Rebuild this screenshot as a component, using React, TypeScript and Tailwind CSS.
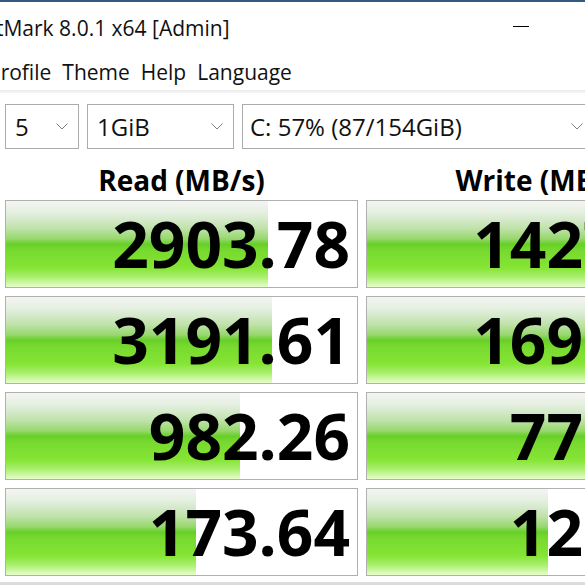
import React from "react";

const font = { fontFamily: '"Open Sans", "Noto Sans", sans-serif' };

interface Result {
  value: string;
  fill: number;
}

const readRows: Result[] = [
  { value: "2903.78", fill: 262 },
  { value: "3191.61", fill: 266 },
  { value: "982.26", fill: 234 },
  { value: "173.64", fill: 190 },
];

const writeRows: Result[] = [
  { value: "1427.52", fill: 400 },
  { value: "1695.33", fill: 400 },
  { value: "778.96", fill: 400 },
  { value: "125.47", fill: 181 },
];

const Chevron = () => (
  <svg width="12" height="7" viewBox="0 0 12 7" className="shrink-0">
    <path d="M0.5 0.5 L6 6 L11.5 0.5" fill="none" stroke="#808080" strokeWidth="1" />
  </svg>
);

const Combo = ({ label, className }: { label: string; className: string }) => (
  <div
    className={`h-[45px] border border-[#ababab] bg-white flex items-center justify-between pl-[9px] pr-[10px] shrink-0 ${className}`}
  >
    <span className="text-[24px] text-[#111]">{label}</span>
    <Chevron />
  </div>
);

const ResultBox = ({ row }: { row: Result }) => (
  <div className="relative w-[353px] h-[88px] shrink-0 border border-[#b0b0b0] bg-white overflow-hidden">
    <div
      className="absolute left-0 top-0 bottom-0 bg-[linear-gradient(to_bottom,#f3f5f2_0%,#e4efe0_14%,#bfe2aa_32%,#97d86c_44%,#67cf29_50%,#78da2f_58%,#86e535_78%,#a8ef6c_88%,#e6fdcc_100%)]"
      style={{ width: row.fill }}
    />
    <div className="relative h-full flex items-center justify-end pr-[7px]">
      <span className="text-[64px] font-bold leading-none text-black">
        {row.value}
      </span>
    </div>
  </div>
);

export default function App() {
  return (
    <div className="w-[585px] h-[585px] overflow-hidden bg-white" style={font}>
      <div className="h-[2px] bg-[#335c82]" />
      <div className="h-[53px] flex items-center relative">
        <span className="ml-[-4px] text-[21px] text-[#111] whitespace-nowrap">
          tMark 8.0.1 x64 [Admin]
        </span>
        <div className="absolute left-[513px] top-[24px] w-[16px] h-[1px] bg-black" />
      </div>
      <div className="h-[35px] flex items-center gap-[11px] text-[21px] text-[#111] whitespace-nowrap ml-[-12px]">
        <span>Profile</span>
        <span>Theme</span>
        <span>Help</span>
        <span>Language</span>
      </div>
      <div className="h-[3px] bg-[linear-gradient(to_bottom,#ececec,#f6f6f6)]" />
      <div className="flex gap-[8px] pl-[5px] mt-[11px] w-[800px]">
        <Combo label="5" className="w-[74px]" />
        <Combo label="1GiB" className="w-[147px]" />
        <div className="h-[45px] w-[360px] border border-[#ababab] bg-white flex items-center justify-between pl-[7px] pr-[18px] shrink-0">
          <span className="text-[24px] text-[#111]">C: 57% (87/154GiB)</span>
          <Chevron />
        </div>
      </div>
      <div className="flex gap-[8px] pl-[5px] w-[900px] mt-[10px]">
        <div className="w-[353px] h-[41px] flex items-center justify-center text-[28px] font-bold text-black shrink-0">
          Read (MB/s)
        </div>
        <div className="w-[353px] h-[41px] flex items-center justify-center text-[28px] font-bold text-black shrink-0">
          Write (MB/s)
        </div>
      </div>
      <div className="flex flex-col gap-[8px] pl-[5px] w-[900px]">
        {readRows.map((r, i) => (
          <div key={i} className="flex gap-[8px]">
            <ResultBox row={r} />
            <ResultBox row={writeRows[i]} />
          </div>
        ))}
      </div>
      <div className="mt-[6px] h-[3px] bg-[#dcdcdc]" />
    </div>
  );
}
